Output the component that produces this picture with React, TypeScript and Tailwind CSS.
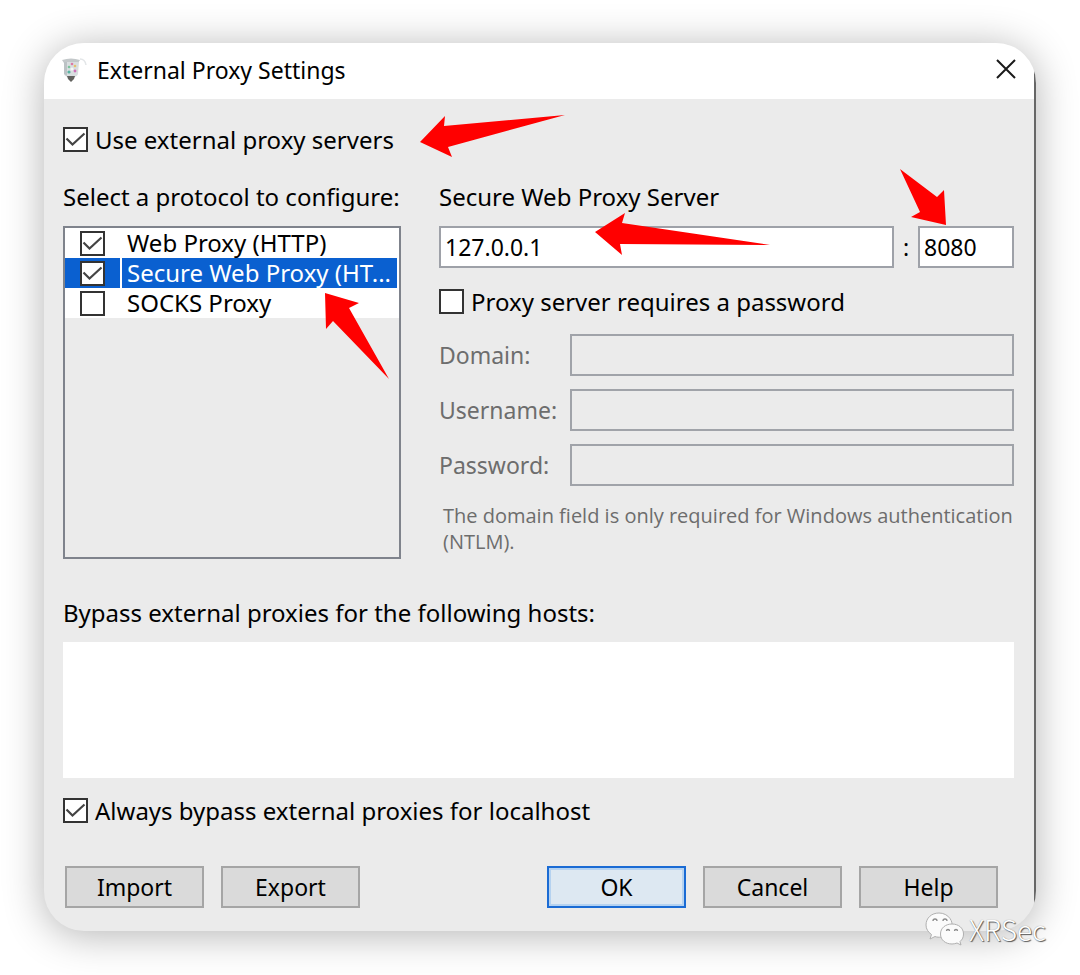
import React, { useState } from 'react';

const PROTOCOLS = [
  { id: 'http', label: 'Web Proxy (HTTP)', enabled: true },
  { id: 'https', label: 'Secure Web Proxy (HT...', enabled: true },
  { id: 'socks', label: 'SOCKS Proxy', enabled: false },
];

const CREDENTIALS = [
  { id: 'domain', label: 'Domain:', type: 'text' },
  { id: 'username', label: 'Username:', type: 'text' },
  { id: 'password', label: 'Password:', type: 'password' },
];

interface TickBoxProps {
  id: string;
  defaultChecked?: boolean;
}

const TickBox: React.FC<TickBoxProps> = ({ id, defaultChecked }) => (
  <span className="relative block w-[25px] h-[25px] shrink-0">
    <input
      id={id}
      type="checkbox"
      defaultChecked={defaultChecked}
      className="peer block w-full h-full appearance-none bg-white border-2 border-[#333333]"
    />
    <svg
      viewBox="0 0 25 25"
      className="absolute inset-0 hidden peer-checked:block pointer-events-none"
      fill="none"
      stroke="#444444"
      strokeWidth="2.2"
    >
      <path d="M3.5 11.5 L9.5 17.5 L21.5 6.5" />
    </svg>
  </span>
);

interface ArrowProps {
  points: string;
  viewBox: string;
  className: string;
}

const Arrow: React.FC<ArrowProps> = ({ points, viewBox, className }) => (
  <svg viewBox={viewBox} className={`absolute z-10 pointer-events-none ${className}`} aria-hidden="true">
    <polygon points={points} fill="#ff0000" />
  </svg>
);

const AppIcon = () => (
  <svg viewBox="0 0 28 28" className="w-7 h-7 shrink-0" aria-hidden="true">
    <path d="M2 4 Q11 1 20 4 L18 7 H4 Z" fill="#c3c8ca" />
    <path d="M4 6 H19 L18 18 Q17 21 11 22 Q5 21 4 18 Z" fill="#d9dee0" />
    <path d="M4 6 H7 V20 L4 18 Z" fill="#bcc2c5" />
    <path d="M7 20 H15 L14 23 L11 26 L8 23 Z" fill="#62625f" />
    <path d="M20 3 Q25 3 26 9" stroke="#e3e6e8" strokeWidth="1.5" fill="none" />
    <circle cx="12" cy="8" r="1.3" fill="#dd7aa4" />
    <circle cx="15" cy="10" r="1.3" fill="#e4c070" />
    <circle cx="9" cy="11" r="1.3" fill="#7cc49c" />
    <circle cx="15" cy="15" r="1.4" fill="#cf70b8" />
    <circle cx="9" cy="16" r="1.6" fill="#58b3a2" />
    <circle cx="12" cy="13" r="1.6" fill="#f6f8f8" />
  </svg>
);

const WeChatMark = () => (
  <svg viewBox="0 0 40 34" className="w-10 h-[34px]" aria-hidden="true">
    <g stroke="#b0b0b0" strokeWidth="1" fill="#fbfbfb">
      <path d="M14 1 C6.5 1 1 6 1 13 C1 17 3 20 6.5 22.5 L5 27 L10 24.5 C14 26 18 25 21 23 C27 19 29 12 25 6.5 C22.5 3 18.5 1 14 1 Z" />
      <path d="M27 12 C20.5 12 15.5 16 15.5 22 C15.5 28 20.5 32 27 32 C29 32 30.5 31.5 32 31 L36 33 L35 29.5 C37.5 27.5 38.500 25 38.5 22 C38.5 16 33.5 12 27 12 Z" />
    </g>
    <g stroke="#8a8a8a" strokeWidth="1.3" fill="none">
      <path d="M8 9 A2 2 0 0 1 12 9" />
      <path d="M18 9 A2 2 0 0 1 22 9" />
      <path d="M21.5 19 A1.5 1.5 0 0 1 24.5 19" />
      <path d="M29.5 19 A1.5 1.5 0 0 1 32.5 19" />
    </g>
  </svg>
);

const DialogButton: React.FC<{ label: string }> = ({ label }) => (
  <button type="button" className="w-[139px] h-[42px] bg-[#dadada] border-2 border-[#a5a5a5] text-[23px] leading-8 text-center">
    {label}
  </button>
);

const App: React.FC = () => {
  const [selected, setSelected] = useState('https');

  return (
    <div className="px-11 pt-[43px] pb-11 bg-white text-black text-2xl leading-8 font-['Noto_Sans','Open_Sans',sans-serif]">
      <form className="relative" onSubmit={e => e.preventDefault()}>
        <div className="relative rounded-[40px] overflow-hidden bg-[#ebebeb] shadow-[0_4px_40px_rgba(0,0,0,0.3)]">
          {/* Title bar */}
          <header className="flex items-center h-14 pl-4 pr-5 pb-0.5 bg-white">
            <AppIcon />
            <h1 className="ml-[9px] flex-1 text-[23px] leading-8">External Proxy Settings</h1>
            <button type="button" aria-label="Close" className="w-5 h-5 mb-0.5">
              <svg viewBox="0 0 20 20" className="w-5 h-5" stroke="#1a1a1a" strokeWidth="2">
                <path d="M1 1 L19 19 M19 1 L1 19" />
              </svg>
            </button>
          </header>

          <div className="pl-[19px] pr-[22px] pt-7 pb-[23px]">
            <div className="relative flex items-center gap-[7px] h-[25px]">
              <TickBox id="use-external" defaultChecked />
              <label htmlFor="use-external">Use external proxy servers</label>
              <Arrow viewBox="0 0 146 44" className="w-[146px] h-11 left-[357px] -top-3" points="0,27 25,1 24,11 145,0 28,32 32,42" />
            </div>

            <div className="mt-[29px] flex gap-[38px]">
              {/* Protocol list */}
              <section className="w-[338px] shrink-0">
                <h2 className="whitespace-nowrap">Select a protocol to configure:</h2>
                <div className="relative mt-[13px] h-[333px] border-2 border-[#7f838c]">
                  <ul>
                    {PROTOCOLS.map(({ id, label, enabled }) => (
                      <li
                        key={id}
                        onClick={() => setSelected(id)}
                        className={`flex h-[30px] pr-0.5 bg-white ${id === selected ? 'text-white' : ''}`}
                      >
                        <span className={`w-[55px] pl-[15px] flex items-center ${id === selected ? 'bg-[#0a60d0]' : ''}`}>
                          <TickBox id={id} defaultChecked={enabled} />
                        </span>
                        <label
                          htmlFor={id}
                          className={`ml-0.5 pl-[5px] flex-1 whitespace-nowrap leading-[30px] ${id === selected ? 'bg-[#0a60d0]' : ''}`}
                        >
                          {label}
                        </label>
                      </li>
                    ))}
                  </ul>
                  <Arrow viewBox="0 0 65 87" className="w-[65px] h-[87px] left-[260px] top-[65px]" points="0,0 34,10 24,15 64,86 8,28 1,36" />
                </div>
              </section>

              {/* Server settings */}
              <section className="flex-1 min-w-0">
                <h2>Secure Web Proxy Server</h2>
                <div className="relative mt-[13px] flex items-center text-[23px]">
                  <input
                    type="text"
                    aria-label="Proxy host"
                    defaultValue="127.0.0.1"
                    className="flex-1 min-w-0 h-[42px] px-1 bg-white border-2 border-[#9ea1a8]"
                  />
                  <span className="w-6 text-center">:</span>
                  <input
                    type="text"
                    aria-label="Proxy port"
                    defaultValue="8080"
                    className="w-24 h-[42px] px-1 bg-white border-2 border-[#9ea1a8]"
                  />
                  <Arrow viewBox="0 0 176 43" className="w-44 h-[43px] left-[156px] -top-[13px]" points="0,19 30,0 27,10 175,32 25,31 27,42" />
                  <Arrow viewBox="0 0 47 57" className="w-[47px] h-[57px] right-[67px] -top-[57px]" points="0,0 37,28 44,21 46,56 11,48 20,43" />
                </div>

                <div className="mt-[21px] flex items-center gap-[7px] h-[25px]">
                  <TickBox id="requires-password" />
                  <label htmlFor="requires-password">Proxy server requires a password</label>
                </div>

                <div className="mt-5 flex flex-col gap-[13px] text-[23px] text-[#6d6d6d]">
                  {CREDENTIALS.map(({ id, label, type }) => (
                    <div key={id} className="flex items-center">
                      <label htmlFor={id} className="w-[131px]">{label}</label>
                      <input
                        id={id}
                        type={type}
                        disabled
                        className="flex-1 min-w-0 h-[42px] px-1 border-2 border-[#a0a3a9]"
                      />
                    </div>
                  ))}
                </div>
                <p className="mt-[17px] pl-1 text-xl leading-[26px] text-[#6d6d6d] font-['Open_Sans',sans-serif]">
                  The domain field is only required for Windows authentication (NTLM).
                </p>
              </section>
            </div>

            {/* Bypass list */}
            <label htmlFor="bypass" className="mt-[38px] block">Bypass external proxies for the following hosts:</label>
            <textarea id="bypass" className="mt-[13px] block w-full h-[136px] p-2 bg-white resize-none" />
            <div className="mt-5 flex items-center gap-[7px] h-[25px]">
              <TickBox id="bypass-localhost" defaultChecked />
              <label htmlFor="bypass-localhost">Always bypass external proxies for localhost</label>
            </div>

            <footer className="mt-[43px] pl-0.5 pr-4 flex gap-[17px]">
              <DialogButton label="Import" />
              <DialogButton label="Export" />
              <button
                type="submit"
                className="ml-auto w-[139px] h-[42px] bg-[#dde8f2] border-2 border-[#1a6bd4] ring-2 ring-inset ring-[#b5d2f0] text-[23px] leading-8 text-center"
              >
                OK
              </button>
              <DialogButton label="Cancel" />
              <DialogButton label="Help" />
            </footer>
          </div>

          {/* Window edge */}
          <div className="absolute right-0 top-6 bottom-6 w-0.5 bg-[#666666]" />
        </div>

        {/* Watermark */}
        <div className="absolute -right-[10px] -bottom-[15px] flex items-center gap-1">
          <WeChatMark />
          <span className="text-[28px] font-light text-white font-['Noto_Sans_CJK_SC',sans-serif] [text-shadow:1px_1px_1px_#555555,0_0_1px_#888888]">
            XRSec
          </span>
        </div>
      </form>
    </div>
  );
};

export default App;
